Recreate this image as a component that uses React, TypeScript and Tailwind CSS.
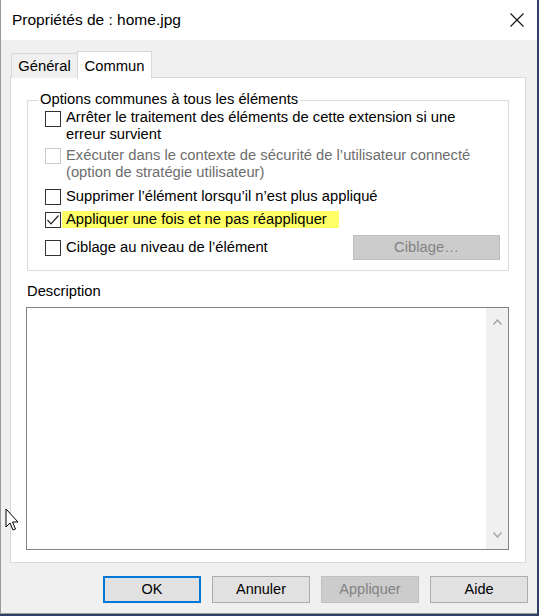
const font = { fontFamily: '"Liberation Sans", Arial, sans-serif' };

function Box({ checked, disabled }: { checked?: boolean; disabled?: boolean }) {
  return (
    <div
      className={`w-[16px] h-[16px] shrink-0 border bg-white flex items-center justify-center ${
        disabled ? "border-[#cccccc]" : "border-[#333333]"
      }`}
    >
      {checked && (
        <svg width="14" height="12" viewBox="0 0 14 12" fill="none">
          <path d="M1.5 6 L5 9.8 L12.5 1.5" stroke="#222" strokeWidth="1.2" />
        </svg>
      )}
    </div>
  );
}

function Btn({ label, primary, disabled }: { label: string; primary?: boolean; disabled?: boolean }) {
  return (
    <div
      className={`w-[98px] h-[27px] flex items-center justify-center text-[14.5px] ${
        disabled
          ? "bg-[#cccccc] border border-[#bfbfbf] text-[#838383]"
          : primary
          ? "bg-[#e1e1e1] border-2 border-[#0078d7] text-black"
          : "bg-[#e1e1e1] border border-[#adadad] text-black"
      }`}
    >
      {label}
    </div>
  );
}

export default function App() {
  return (
    <div className="w-[539px] h-[616px] bg-[#2f3f66] relative" style={font}>
      <div className="w-[537px] h-[614px] bg-[#f0f0f0] border-l border-b border-[#9a9a9a] flex flex-col">
        {/* barre de titre */}
        <div className="h-[40px] bg-white flex items-center justify-between pl-[11px] pr-[13px] shrink-0">
          <span className="text-[15.5px] text-black">Propriétés de : home.jpg</span>
          <svg width="14" height="14" viewBox="0 0 14 14">
            <path d="M0.5 0.5 L13.5 13.5 M13.5 0.5 L0.5 13.5" stroke="#111" strokeWidth="1.1" />
          </svg>
        </div>

        {/* onglets */}
        <div className="flex items-end pl-[9px] pt-[10px] h-[38px] shrink-0 relative z-10">
          <div className="w-[67px] h-[25px] border border-b-0 border-[#d9d9d9] bg-[#f0f0f0] flex items-center justify-center text-[14.75px] ml-px">
            Général
          </div>
          <div className="w-[75px] h-[28px] border border-b-0 border-[#d9d9d9] bg-white flex items-start justify-center pt-[3px] text-[14.75px] -ml-px -mb-px">
            Commun
          </div>
        </div>

        {/* panneau */}
        <div className="ml-[9px] mr-[11px] h-[486px] -mt-px bg-white border border-[#d9d9d9] flex flex-col px-[16px] shrink-0 text-[14.75px] leading-[17px]">
          {/* groupe */}
          <div className="mt-[22px] h-[171px] border border-[#dcdcdc] relative flex flex-col pl-[17px] pr-[8px]">
            <span className="absolute -top-[10px] left-[10px] bg-white px-[2px] text-black">
              Options communes à tous les éléments
            </span>

            <div className="flex items-start gap-[5px] mt-[8px]">
              <div className="mt-[2px]"><Box /></div>
              <span>
                Arrêter le traitement des éléments de cette extension si une
                <br />
                erreur survient
              </span>
            </div>

            <div className="flex items-start gap-[5px] mt-[4px] text-[#6d6d6d]">
              <div className="mt-[1px]"><Box disabled /></div>
              <span>
                Exécuter dans le contexte de sécurité de l’utilisateur connecté
                <br />
                (option de stratégie utilisateur)
              </span>
            </div>

            <div className="flex items-center gap-[5px] mt-[7px]">
              <Box />
              <span>Supprimer l’élément lorsqu’il n’est plus appliqué</span>
            </div>

            <div className="flex items-center gap-[1px] mt-[6px]">
              <Box checked />
              <span className="bg-[#ffff66] pl-[4px] pr-[12px]">Appliquer une fois et ne pas réappliquer</span>
            </div>

            <div className="flex items-center gap-[5px] mt-[7px]">
              <Box />
              <span className="flex-1">Ciblage au niveau de l’élément</span>
              <div className="w-[147px] h-[25px] bg-[#cccccc] border border-[#bfbfbf] text-[#838383] flex items-center justify-center">
                Ciblage…
              </div>
            </div>
          </div>

          {/* description */}
          <div className="mt-[12px] text-black">Description</div>
          <div className="mt-[7px] h-[243px] -ml-px border border-[#828282] bg-white flex justify-end">
            <div className="w-[22px] h-full bg-[#f0f0f0] flex flex-col items-center justify-between py-[11px]">
              <svg width="9" height="6" viewBox="0 0 9 6">
                <path d="M0.5 5.5 L4.5 1 L8.5 5.5" stroke="#a3a3a3" strokeWidth="1.4" fill="none" />
              </svg>
              <svg width="9" height="6" viewBox="0 0 9 6">
                <path d="M0.5 0.5 L4.5 5 L8.5 0.5" stroke="#a3a3a3" strokeWidth="1.4" fill="none" />
              </svg>
            </div>
          </div>
        </div>

        {/* boutons */}
        <div className="flex justify-end gap-[11px] pr-[9px] mt-[13px]">
          <Btn label="OK" primary />
          <Btn label="Annuler" />
          <Btn label="Appliquer" disabled />
          <Btn label="Aide" />
        </div>
      </div>

      {/* curseur */}
      <svg className="absolute left-[5px] top-[508px]" width="14" height="24" viewBox="0 0 14 24">
        <path
          d="M1 1 L1 19 L5 15 L8 22 L10.5 21 L7.5 14 L13 14 Z"
          fill="white"
          stroke="black"
          strokeWidth="1"
          strokeLinejoin="round"
        />
      </svg>
    </div>
  );
}
